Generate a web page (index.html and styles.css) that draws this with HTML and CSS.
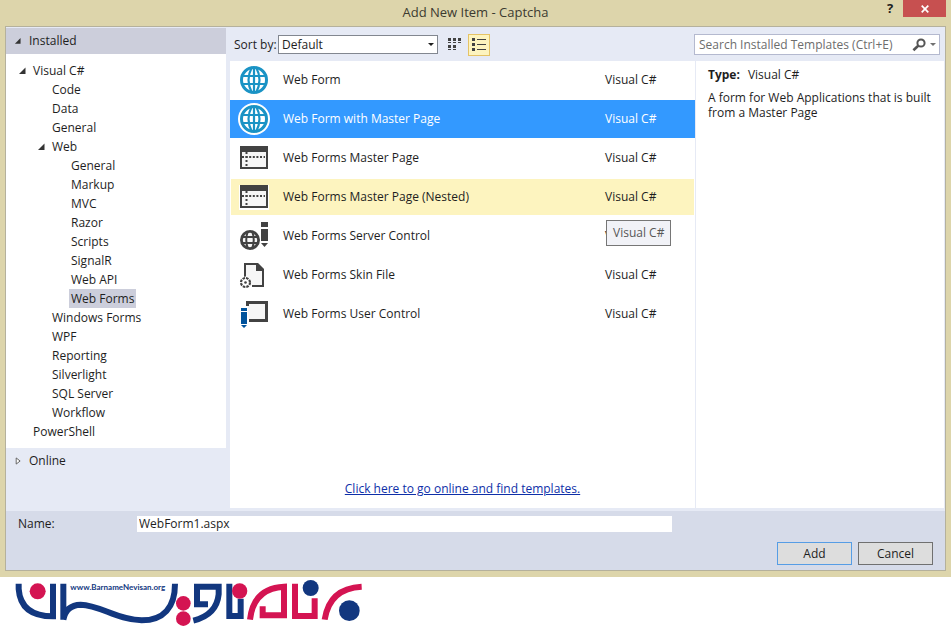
FILE: index.html
```html
<!DOCTYPE html>
<html lang="en">
<head>
<meta charset="utf-8">
<title>Add New Item - Captcha</title>
<link rel="stylesheet" href="styles.css">
</head>
<body>
<svg class="defs" aria-hidden="true">
  <symbol id="globe" viewBox="0 0 32 32">
    <circle cx="16" cy="16" r="12.5" fill="#fff" stroke="currentColor" stroke-width="3"/>
    <path d="M4 12H28M4 20H28M14 3Q7 16 14 29M18 3Q25 16 18 29M16 3V29" fill="none" stroke="currentColor" stroke-width="2.2"/>
  </symbol>
  <symbol id="master" viewBox="0 0 32 32">
    <path d="M1 4H31V29H1Z" fill="#fff"/>
    <path d="M2 4H30V27H2Z" fill="#424242"/>
    <path d="M4 10H28V25H4Z" fill="#f6f6f6"/>
    <path d="M4 15H27" stroke="#424242" stroke-width="2" stroke-dasharray="2 1.6"/>
    <path d="M8.5 10V25" stroke="#424242" stroke-width="2" stroke-dasharray="2 2"/>
  </symbol>
  <symbol id="expanded" viewBox="0 0 8 8"><path d="M7.500 0.500V7H1Z" fill="#333"/></symbol>
</svg>

<main class="window">
  <header class="titlebar">
    <h1>Add New Item - Captcha</h1>
    <div class="caption-buttons">
      <button class="help" type="button">?</button>
      <button class="close" type="button" aria-label="Close"><svg viewBox="0 0 8 8"><path d="M0.7 0.7L7.3 7.3M7.3 0.7L0.7 7.3" stroke="#fff" stroke-width="1.7"/></svg></button>
    </div>
  </header>

  <form class="dialog">
    <div class="content">
      <nav class="sidebar">
        <button class="section installed" type="button"><svg><use href="#expanded"/></svg>Installed</button>
        <ul class="tree">
          <li><button class="node" type="button"><svg><use href="#expanded"/></svg><span>Visual C#</span></button>
            <ul>
              <li><button class="node" type="button"><span>Code</span></button></li>
              <li><button class="node" type="button"><span>Data</span></button></li>
              <li><button class="node" type="button"><span>General</span></button></li>
              <li><button class="node" type="button"><svg><use href="#expanded"/></svg><span>Web</span></button>
                <ul>
                  <li><button class="node" type="button"><span>General</span></button></li>
                  <li><button class="node" type="button"><span>Markup</span></button></li>
                  <li><button class="node" type="button"><span>MVC</span></button></li>
                  <li><button class="node" type="button"><span>Razor</span></button></li>
                  <li><button class="node" type="button"><span>Scripts</span></button></li>
                  <li><button class="node" type="button"><span>SignalR</span></button></li>
                  <li><button class="node" type="button"><span>Web API</span></button></li>
                  <li><button class="node current" type="button"><span>Web Forms</span></button></li>
                </ul>
              </li>
              <li><button class="node" type="button"><span>Windows Forms</span></button></li>
              <li><button class="node" type="button"><span>WPF</span></button></li>
              <li><button class="node" type="button"><span>Reporting</span></button></li>
              <li><button class="node" type="button"><span>Silverlight</span></button></li>
              <li><button class="node" type="button"><span>SQL Server</span></button></li>
              <li><button class="node" type="button"><span>Workflow</span></button></li>
            </ul>
          </li>
          <li><button class="node" type="button"><span>PowerShell</span></button></li>
        </ul>
        <button class="section online" type="button"><svg viewBox="0 0 8 8"><path d="M2.500 0.500V7.500L7 4Z" fill="#fff" stroke="#555"/></svg>Online</button>
      </nav>

      <section class="browser">
        <div class="toolbar">
          <label for="sort">Sort by:</label>
          <div class="select">
            <select id="sort"><option>Default</option></select>
            <svg viewBox="0 0 6 3"><path d="M0 0H6L3 3Z" fill="#1e1e1e"/></svg>
          </div>
          <button class="view" type="button" aria-label="Small icons">
            <svg viewBox="0 0 16 16" fill="#424242"><path d="M1 1h3v3H1zM6 1h3v3H6zM11 1h3v3h-3zM1 8h3v3H1zM6 8h3v3H6z"/><path d="M1 5h3v1H1zM6 5h3v1H6zM11 5h3v1h-3zM1 12h3v1H1zM6 12h3v1H6z"/></svg>
          </button>
          <button class="view pressed" type="button" aria-label="Medium icons">
            <svg viewBox="0 0 16 16" fill="#424242"><path d="M1 1h3v3H1zM1 6h3v3H1zM1 11h3v3H1zM6 2h9v1H6zM6 7h9v1H6zM6 12h9v1H6z"/></svg>
          </button>
          <div class="search">
            <input type="search" placeholder="Search Installed Templates (Ctrl+E)" aria-label="Search Installed Templates">
            <button type="button" aria-label="Search">
              <svg class="glass" viewBox="0 0 14 14"><circle cx="9" cy="5" r="3.6" fill="none" stroke="#555" stroke-width="2"/><path d="M6.5 7.5L1.4 12.2" stroke="#555" stroke-width="2.6"/></svg>
              <svg class="caret" viewBox="0 0 6 3"><path d="M0 0H6L3 3Z" fill="#717171"/></svg>
            </button>
          </div>
        </div>

        <div class="panes">
          <div class="templates">
            <ul>
              <li><svg class="blue"><use href="#globe"/></svg><span>Web Form</span><span>Visual C#</span></li>
              <li class="selected"><svg class="blue" viewBox="0 0 32 32"><circle cx="16" cy="16" r="16" fill="#fff"/><use href="#globe"/></svg><span>Web Form with Master Page</span><span>Visual C#</span></li>
              <li><svg><use href="#master"/></svg><span>Web Forms Master Page</span><span>Visual C#</span></li>
              <li class="hover"><svg><use href="#master"/></svg><span>Web Forms Master Page (Nested)</span><span class="kind">Visual C#<span class="tooltip" role="tooltip">Visual C#</span></span></li>
              <li><svg viewBox="0 0 32 32"><g fill="none" stroke="#424242"><circle cx="12" cy="20" r="8.6" fill="#f6f6f6" stroke-width="2.800"/><path d="M3 17H21M3 23H21M10 11Q6.500 20 10 29M14 11Q17.500 20 14 29" stroke-width="2"/></g><path d="M23 2h7v5h-7zM23 9h7v12h-7zM23 23h7l-3.500 4z" fill="#424242"/></svg><span>Web Forms Server Control</span><span>Visual C#</span></li>
              <li><svg viewBox="0 0 32 32"><path d="M7 18V5H19L25 11V27H14" fill="#f6f6f6" stroke="#424242" stroke-width="2"/><path d="M18 4H20L26 10V12H18Z" fill="#424242"/><circle cx="7.500" cy="23.500" r="6" fill="#fff"/><circle cx="7.500" cy="23.500" r="4.500" fill="none" stroke="#424242" stroke-width="2.200" stroke-dasharray="2.530 1"/><circle cx="7.500" cy="23.500" r="1.300" fill="#424242"/></svg><span>Web Forms Skin File</span><span>Visual C#</span></li>
              <li><svg viewBox="0 0 32 32"><path d="M9.500 8V4.500H28.500V22.500H11" fill="#f6f6f6" stroke="#424242" stroke-width="3"/><path d="M2 8h8v22H2z" fill="#fff"/><path d="M3 10h6v3H3zM3 14h6v12H3zM3 27h6l-3 3z" fill="#00539c"/></svg><span>Web Forms User Control</span><span>Visual C#</span></li>
            </ul>
            <a href="#online">Click here to go online and find templates.</a>
          </div>
          <aside class="details">
            <p><strong>Type:</strong>Visual C#</p>
            <p>A form for Web Applications that is built from a Master Page</p>
          </aside>
        </div>
      </section>
    </div>

    <footer class="footer">
      <div class="name-row">
        <label for="name">Name:</label>
        <input id="name" type="text" value="WebForm1.aspx">
      </div>
      <div class="actions">
        <button class="default" type="button">Add</button>
        <button type="button">Cancel</button>
      </div>
    </footer>
  </form>
</main>

<svg class="logo" viewBox="0 0 1140 150">
  <g fill="none" stroke="#12377f" stroke-width="18">
    <path d="M56 20V36Q62 118 159 118V20"/>
    <path d="M190 20V128M190 128Q198 84 242 83C300 84 350 128 425 130C490 130 525 92 525 20"/>
    <path d="M624 82H591V29H656V52Q650 114 580 131"/>
    <path d="M688 20V117H722V65"/>
  </g>
  <g fill="none" stroke="#d41452" stroke-width="18">
    <path d="M750 128Q760 34 852 29V115H788V88"/>
    <path d="M885 20V117H944V64"/>
    <path d="M974 128Q988 34 1085 29"/>
  </g>
  <g fill="#d41452">
    <circle cx="113" cy="43" r="24"/>
    <circle cx="550" cy="79" r="22"/>
    <circle cx="550" cy="125" r="22"/>
    <circle cx="719" cy="42" r="23"/>
  </g>
  <g fill="#12377f">
    <circle cx="932" cy="33" r="24"/>
    <circle cx="1048" cy="101" r="31"/>
  </g>
  <text x="211" y="38">www.BarnameNevisan.org</text>
</svg>
</body>
</html>
```
FILE: styles.css
```css
* {
  box-sizing: border-box;
}

body {
  margin: 0;
  background: #fff;
  color: #1e1e1e;
  font: 12px/16px "Open Sans", "Noto Sans", sans-serif;
}

ul,
h1,
p {
  margin: 0;
  padding: 0;
  list-style: none;
}

button,
input,
select {
  margin: 0;
  padding: 0;
  border: 0;
  border-radius: 0;
  background: none;
  color: inherit;
  font: inherit;
}

svg {
  display: block;
  flex: none;
}

.defs {
  position: absolute;
  width: 0;
  height: 0;
}

.window {
  padding: 0 5px 6px;
  background: #ddd5ab;
}

/* Title bar */
.titlebar {
  display: grid;
  grid-template-columns: 1fr auto 1fr;
  height: 26px;
}

.titlebar h1 {
  grid-column: 2;
  color: #3c3a30;
  font-size: 13px;
  font-weight: 400;
  line-height: 24px;
}

.caption-buttons {
  display: flex;
  justify-content: flex-end;
  align-items: flex-start;
  gap: 8px;
}

.help {
  width: 10px;
  font-size: 13px;
  font-weight: 700;
}

.close {
  display: grid;
  place-items: center;
  width: 43px;
  height: 17px;
  background: #c75050;
}

.close svg {
  width: 8px;
  height: 8px;
}

/* Dialog */
.dialog {
  border: 1px solid #b5b19c;
  background: #e6eaf5;
}

.content {
  display: grid;
  grid-template-columns: 220px 1fr;
  gap: 4px;
  padding: 1px 1px 3px 0;
}

.section {
  display: flex;
  align-items: center;
  gap: 8px;
  width: 100%;
  height: 26px;
  padding-left: 8px;
}

.section svg {
  width: 7px;
  height: 8px;
}

.installed {
  background: #cccedb;
}

.tree {
  padding: 7px 0 7px 12px;
  background: #fff;
}

.tree ul {
  padding-left: 19px;
}

.node {
  display: grid;
  grid-template-columns: 13px auto;
  align-items: center;
  height: 19px;
}

.node svg {
  width: 8px;
  height: 8px;
}

.node span {
  grid-column: 2;
  padding: 0 2px;
  line-height: 19px;
}

.current span {
  background: #cccedb;
}

/* Toolbar */
.browser {
  display: flex;
  flex-direction: column;
}

.toolbar {
  display: flex;
  align-items: center;
  height: 33px;
  padding: 0 4px;
}

.toolbar label {
  width: 40px;
  white-space: nowrap;
}

.select {
  position: relative;
  width: 160px;
  margin: 0 6px 0 4px;
}

.select select {
  display: block;
  width: 100%;
  height: 19px;
  padding: 0 3px;
  border: 1px solid #828790;
  background: #fff;
  appearance: none;
}

.select svg {
  position: absolute;
  top: 8px;
  right: 4px;
  width: 6px;
  height: 3px;
}

.view {
  display: grid;
  place-items: center;
  width: 22px;
  height: 22px;
  margin-right: 2px;
}

.view svg {
  width: 16px;
  height: 16px;
}

.pressed {
  border: 1px solid #e5c365;
  background: #fdf4bf;
}

.search {
  display: flex;
  width: 246px;
  height: 21px;
  margin-left: auto;
  border: 1px solid #b4b9cf;
  background: #fff;
}

.search input {
  flex: 1;
  min-width: 0;
  padding-left: 4px;
  outline: 0;
}

.search input::placeholder {
  color: #6d6d6d;
  opacity: 1;
}

.search button {
  display: flex;
  align-items: center;
  gap: 4px;
  padding-right: 3px;
}

.glass {
  width: 14px;
  height: 14px;
}

.caret {
  width: 6px;
  height: 3px;
}

/* Template list */
.panes {
  display: grid;
  flex: 1;
  grid-template-columns: 1fr 249px;
  background: #fff;
}

.templates {
  display: flex;
  flex-direction: column;
  justify-content: space-between;
  min-height: 447px;
  padding-bottom: 11px;
}

.templates li {
  display: grid;
  grid-template-columns: 32px 1fr 90px;
  align-items: center;
  height: 39px;
  padding-left: 8px;
  column-gap: 13px;
  border: solid #fff;
  border-width: 0 0 1px;
}

.templates li svg {
  width: 32px;
  height: 32px;
}

.templates .blue {
  color: #1a93c5;
}

.templates .selected {
  background: #39f;
  color: #fff;
}

.templates .hover {
  grid-template-columns: 32px 1fr 89px;
  padding-left: 7px;
  border-width: 1px 1px 2px;
  background: #fdf4bf;
}

.kind {
  position: relative;
}

.tooltip {
  position: absolute;
  top: 31px;
  left: 1px;
  padding: 4px 6px;
  border: 1px solid #767676;
  background: #f1f2f7;
  color: #575757;
  white-space: nowrap;
}

.templates a {
  align-self: center;
  color: #0e2fa8;
}

.details {
  padding: 6px 12px;
  border-left: 1px solid #e6eaf5;
}

.details p {
  margin-bottom: 8px;
  line-height: 15px;
}

.details strong {
  margin-right: 8px;
}

/* Footer */
.footer {
  padding: 5px 12px 5px;
  background: #d6dbe9;
}

.name-row {
  display: grid;
  grid-template-columns: 119px 1fr;
  align-items: center;
  padding-right: 261px;
}

.name-row input {
  height: 16px;
  padding: 0 2px;
  background: #fff;
}

.actions {
  display: flex;
  justify-content: flex-end;
  gap: 6px;
  margin-top: 10px;
}

.actions button {
  width: 75px;
  height: 23px;
  border: 1px solid #707070;
  background: #ddd;
}

.actions .default {
  border-color: #569de5;
}

.logo {
  width: 380px;
  height: 50px;
}

.logo text {
  fill: #12377f;
  font: 700 24px Lato, sans-serif;
}
```
